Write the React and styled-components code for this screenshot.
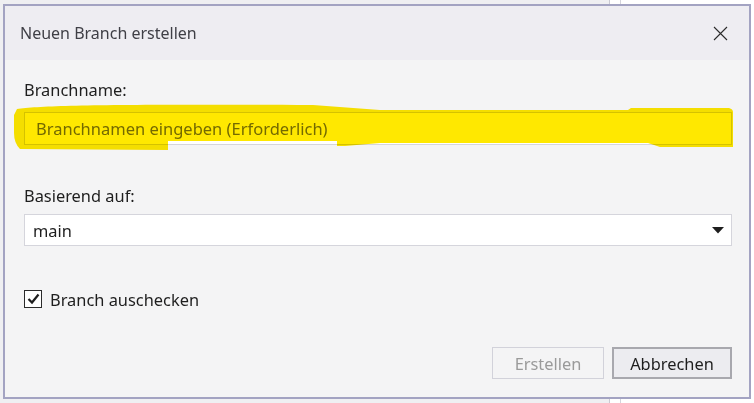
import React from "react";
import styled, { createGlobalStyle } from "styled-components";

const GlobalStyle = createGlobalStyle`
  html, body {
    margin: 0;
    padding: 0;
    height: 100%;
    background: linear-gradient(
      to right,
      #efeff2 0 609px,
      #c9c9d2 609px 610px,
      #ffffff 610px 620px,
      #d4d4dc 620px 621px,
      #ffffff 621px
    );
    font-family: "Segoe UI", "Noto Sans", "Open Sans", sans-serif;
  }
  * { box-sizing: border-box; }
`;

const Page = styled.div`
  padding: 4px 0 0 3px;
`;

const Dialog = styled.div`
  width: 748px;
  height: 395px;
  border: 2px solid #a3a3c2;
  background: #f4f4f5;
  display: flex;
  flex-direction: column;
`;

const Header = styled.div`
  height: 54px;
  flex: none;
  background: #eeedf2;
  display: flex;
  align-items: center;
  justify-content: space-between;
  padding: 0 21px 0 15px;
`;

const Title = styled.div`
  font-size: 16px;
  color: #3f3f46;
`;

const CloseButton = styled.button`
  border: none;
  background: transparent;
  padding: 0;
  width: 16px;
  height: 16px;
  display: flex;
  align-items: center;
  justify-content: center;
  cursor: pointer;
`;

const Body = styled.div`
  flex: 1;
  display: flex;
  flex-direction: column;
  padding: 20px 17px 18px 19px;
`;

const Label = styled.div`
  font-size: 16.4px;
  line-height: 20px;
  color: #1e1e1e;
  margin-top: ${(p) => p.$top || 0}px;
`;

const FieldWrap = styled.div`
  position: relative;
  margin-top: 12px;
`;

const TextInput = styled.input`
  display: block;
  width: 100%;
  height: 33px;
  border: 1px solid #d5d5dc;
  background: #ffffff;
  padding: 0 11px;
  font-family: inherit;
  font-size: 16.5px;
  color: #1e1e1e;
  outline: none;
  &::placeholder {
    color: #747474;
  }
`;

const Highlight = styled.svg`
  position: absolute;
  left: -11px;
  top: -9px;
  width: 721px;
  height: 48px;
  mix-blend-mode: multiply;
  pointer-events: none;
`;

const Select = styled.div`
  margin-top: 8px;
  height: 32px;
  border: 1px solid #d5d5dc;
  background: #ffffff;
  display: flex;
  align-items: center;
  justify-content: space-between;
  padding: 0 7px 0 8px;
  font-size: 16.4px;
  color: #1e1e1e;
`;

const CheckRow = styled.label`
  margin-top: 43px;
  display: flex;
  align-items: center;
  gap: 8px;
  height: 20px;
  font-size: 16.4px;
  color: #1e1e1e;
`;

const CheckBox = styled.span`
  width: 18px;
  height: 18px;
  border: 1.5px solid #2b2b2b;
  background: #ffffff;
  display: flex;
  align-items: center;
  justify-content: center;
`;

const ButtonRow = styled.div`
  margin-top: auto;
  display: flex;
  justify-content: flex-end;
  gap: 8px;
`;

const Button = styled.button`
  width: ${(p) => p.$w}px;
  height: 32px;
  font-family: inherit;
  font-size: 16.4px;
  border: ${(p) => (p.disabled ? "1px solid #d2d2da" : "2px solid #a8a8ae")};
  background: ${(p) => (p.disabled ? "#f4f4f5" : "#ececf0")};
  color: ${(p) => (p.disabled ? "#9a9a9a" : "#1e1e1e")};
  padding: 0;
`;

export default function App() {
  return (
    <>
      <GlobalStyle />
      <Page>
        <Dialog>
          <Header>
            <Title>Neuen Branch erstellen</Title>
            <CloseButton aria-label="Schließen">
              <svg width="15" height="15" viewBox="0 0 15 15">
                <path d="M1 1 L14 14 M14 1 L1 14" stroke="#2b2b2b" strokeWidth="1.1" fill="none" />
              </svg>
            </CloseButton>
          </Header>
          <Body>
            <Label>Branchname:</Label>
            <FieldWrap>
              <TextInput placeholder="Branchnamen eingeben (Erforderlich)" />
              <Highlight viewBox="0 0 721 48">
                <path
                  d="M4,6 C30,2 100,1 300,2 L367,7 L615,7 L618,5 L716,5 Q720,6 720,9 L720,44 L647,44 L635,40 L367,40 L332,43 L324,43 L324,38 L155,38 L155,47 L7,46 Q1,40 1,30 L1,12 Z"
                  fill="#ffe800"
                />
              </Highlight>
            </FieldWrap>
            <Label $top={41}>Basierend auf:</Label>
            <Select>
              <span>main</span>
              <svg width="12" height="7" viewBox="0 0 12 7">
                <path d="M0 0 L12 0 L6 6.5 Z" fill="#1e1e1e" />
              </svg>
            </Select>
            <CheckRow>
              <CheckBox>
                <svg width="13" height="12" viewBox="0 0 13 12">
                  <path d="M1.5 6 L5 9.5 L11.5 1.5" stroke="#1e1e1e" strokeWidth="2.2" fill="none" />
                </svg>
              </CheckBox>
              Branch auschecken
            </CheckRow>
            <ButtonRow>
              <Button $w={112} disabled>Erstellen</Button>
              <Button $w={120}>Abbrechen</Button>
            </ButtonRow>
          </Body>
        </Dialog>
      </Page>
    </>
  );
}
